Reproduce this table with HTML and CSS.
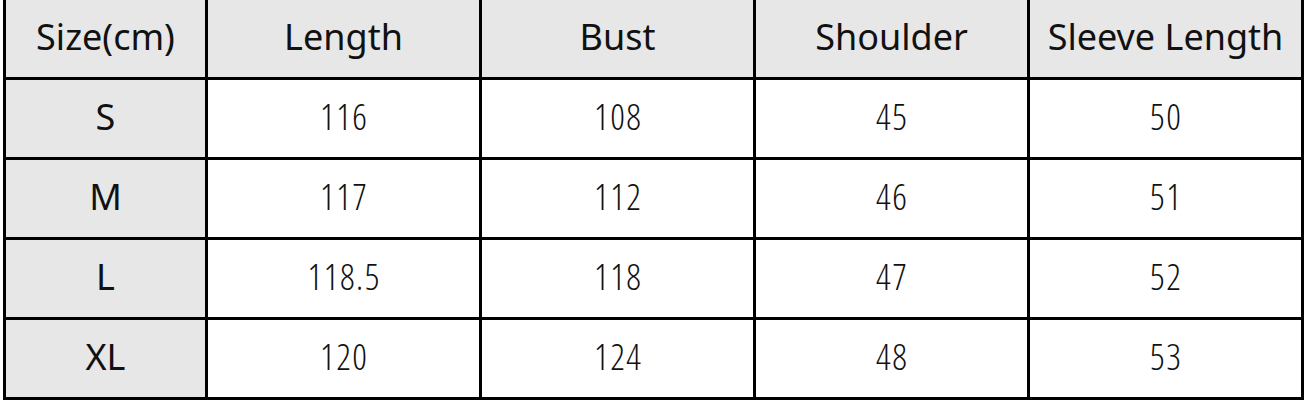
FILE: index.html
```html
<!DOCTYPE html>
<html>
<head>
<meta charset="utf-8">
<link rel="stylesheet" href="styles.css">
</head>
<body>
<div class="wrap">
<table class="size-table">
  <colgroup>
    <col class="c-first">
    <col class="c-data"><col class="c-data"><col class="c-data"><col class="c-data">
  </colgroup>
  <thead>
    <tr><th>Size(cm)</th><th>Length</th><th>Bust</th><th>Shoulder</th><th>Sleeve Length</th></tr>
  </thead>
  <tbody>
    <tr><th>S</th><td>116</td><td>108</td><td>45</td><td>50</td></tr>
    <tr><th>M</th><td>117</td><td>112</td><td>46</td><td>51</td></tr>
    <tr><th>L</th><td>118.5</td><td>118</td><td>47</td><td>52</td></tr>
    <tr><th>XL</th><td>120</td><td>124</td><td>48</td><td>53</td></tr>
  </tbody>
</table>
</div>
</body>
</html>
```

FILE: styles.css
```css
html, body {
  margin: 0;
  padding: 0;
  background: #ffffff;
}
.wrap {
  padding-left: 3px;
  margin-top: -3px;
}
.size-table {
  border-collapse: collapse;
  table-layout: fixed;
  width: 1300px;
  font-family: "Noto Sans", "Open Sans", sans-serif;
  color: #111;
}
.c-first { width: 202px; }
.c-data { width: 274px; }
.size-table th,
.size-table td {
  border: 3px solid #000;
  text-align: center;
  vertical-align: middle;
  padding: 0 0 4px 0;
  font-size: 36px;
  font-weight: 400;
  line-height: 1;
}
.size-table thead tr {
  height: 80px;
}
.size-table thead th {
  background: #e7e7e7;
}
.size-table tbody tr {
  height: 80px;
}
.size-table tbody th {
  background: #e7e7e7;
}
.size-table tbody td {
  background: #fff;
  font-family: "Open Sans", "Noto Sans", sans-serif;
  font-weight: 300;
  font-stretch: 87.5%;
  font-size: 36px;
  letter-spacing: 1.5px;
  text-indent: 1.5px;
}
```
